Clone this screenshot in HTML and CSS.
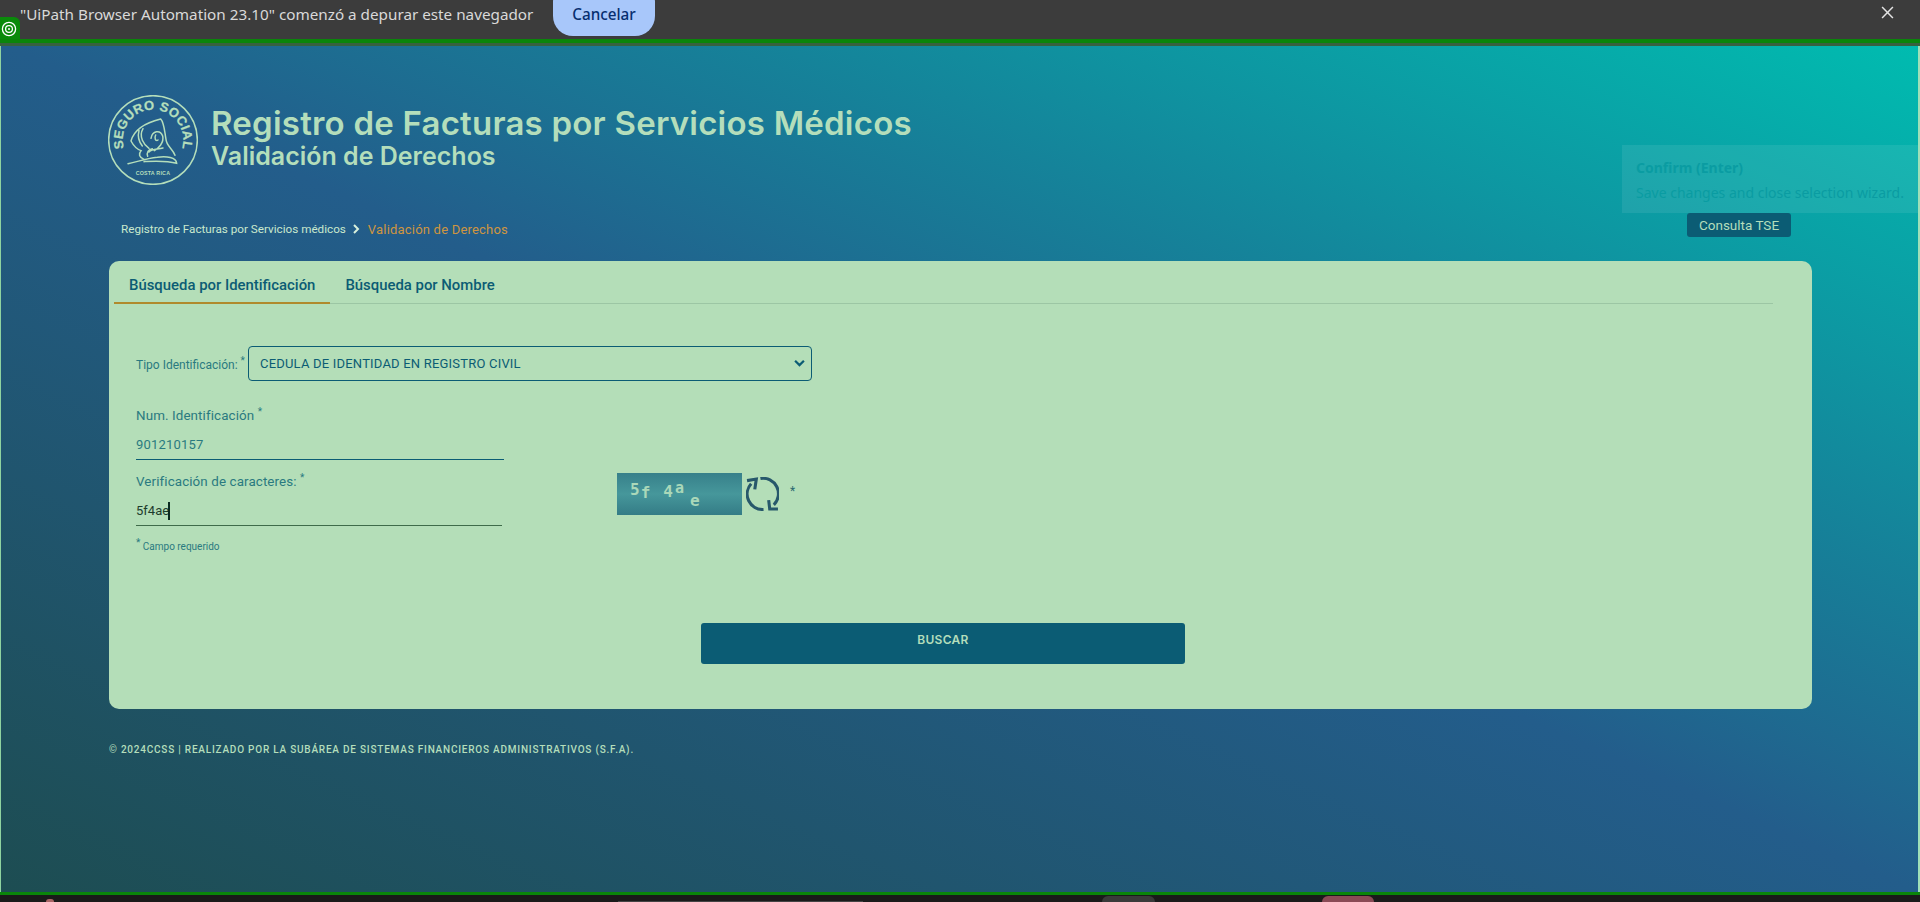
FILE: index.html
```html
<!DOCTYPE html>
<html lang="es">
<head>
<meta charset="utf-8">
<title>Validación de Derechos</title>
<link rel="stylesheet" href="styles.css">
</head>
<body>
<div class="infobar">
  <span class="infobar-text">"UiPath Browser Automation 23.10" comenzó a depurar este navegador</span>
  <button class="cancel">Cancelar</button>
  <svg class="close" viewBox="0 0 12 12"><path d="M1 1 11 11M11 1 1 11"/></svg>
</div>
<div class="target-tab">
  <svg viewBox="0 0 16 16"><circle cx="8" cy="8" r="6.6"/><circle cx="8" cy="8" r="3.4"/><circle class="dot" cx="8" cy="8" r="1"/></svg>
</div>
<div class="green-line"></div>
<main class="page">
  <div class="tooltip">
    <div class="tooltip-title">Confirm (Enter)</div>
    <div class="tooltip-text">Save changes and close selection wizard.</div>
  </div>
  <header class="brand">
    <svg class="logo" viewBox="57 45 270 270">
      <defs><path id="arc" d="M105 205A90.5 90.5 0 1 1 279 205"/></defs>
      <circle class="logo-ring" cx="192" cy="180" r="133"/>
      <text class="logo-arc"><textPath href="#arc" textLength="335">SEGURO SOCIAL</textPath></text>
      <path class="logo-fig" d="M117 251C150 244 170 236 205 232C232 228 262 232 263 250C230 241 200 243 165 245M126 183C135 150 170 128 215 117C226 128 227 158 231 178C232 198 250 205 258 226M126 183C134 198 145 208 156 212C148 222 150 232 165 238M162 146C148 170 165 195 180 205M186 175C190 152 214 148 221 168C226 188 208 205 196 212M180 216C190 206 205 209 222 204M176 229C172 218 178 208 190 206M150 152C145 170 152 188 160 198M200 165C195 175 200 185 207 180"/>
      <text class="logo-small" x="140" y="284" textLength="103">COSTA RICA</text>
    </svg>
    <div class="titles">
      <h1>Registro de Facturas por Servicios Médicos</h1>
      <h2>Validación de Derechos</h2>
    </div>
  </header>
  <div class="crumb-row">
    <nav class="crumbs">
      <span class="crumb-link">Registro de Facturas por Servicios médicos</span>
      <svg class="crumb-sep" viewBox="0 0 8 10"><path d="M2 1 6 5 2 9"/></svg>
      <span class="crumb-current">Validación de Derechos</span>
    </nav>
    <button class="tse">Consulta TSE</button>
  </div>
  <section class="card">
    <div class="tabs">
      <div class="tab active">Búsqueda por Identificación</div>
      <div class="tab">Búsqueda por Nombre</div>
    </div>
    <div class="form">
      <div class="select-row">
        <label class="select-label">Tipo Identificación: <sup>*</sup></label>
        <div class="select">
          <span>CEDULA DE IDENTIDAD EN REGISTRO CIVIL</span>
          <svg viewBox="0 0 10 8"><path d="M1 1.5 5 5.5 9 1.5"/></svg>
        </div>
      </div>
      <div class="fields">
        <div class="inputs">
          <div class="field first">
            <label>Num. Identificación <sup>*</sup></label>
            <div class="value">901210157</div>
          </div>
          <div class="field second">
            <label>Verificación de caracteres: <sup>*</sup></label>
            <div class="value typed">5f4ae<span class="caret"></span></div>
          </div>
          <div class="required"><sup>*</sup> Campo requerido</div>
        </div>
        <div class="captcha-row">
          <div class="captcha"><span class="c1">5</span><span class="c2">f</span><span class="c3">4</span><span class="c4">a</span><span class="c5">e</span></div>
          <svg class="refresh" viewBox="0 0 32 33"><path d="M17 31.500A15 15 0 0 1 5 6.500M1 3.500 10 2 8.500 12M14 1.500A15 15 0 0 1 27 27M22 22.500 23 31 31 31"/></svg>
          <span class="captcha-star">*</span>
        </div>
      </div>
      <div class="action"><button class="search">BUSCAR</button></div>
    </div>
  </section>
  <footer class="copy">© 2024CCSS | REALIZADO POR LA SUBÁREA DE SISTEMAS FINANCIEROS ADMINISTRATIVOS (S.F.A).</footer>
</main>
<div class="green-line bottom"></div>
<div class="taskbar">
  <span class="tb-a"></span><span class="tb-b"></span><span class="tb-c"></span><span class="tb-d"></span>
</div>
</body>
</html>
```
FILE: styles.css
```css
* { box-sizing: border-box; }
html, body { margin: 0; height: 902px; overflow: hidden; }
body {
  display: flex;
  flex-direction: column;
  position: relative;
  font-family: Roboto, "Liberation Sans", sans-serif;
  background: #1a1a1a;
}
sup { font-size: 10px; line-height: 0; }

.infobar {
  height: 39px;
  flex: none;
  background: #3c3c3c;
  display: flex;
  align-items: flex-start;
  padding-left: 20px;
  font-family: "Noto Sans", sans-serif;
  overflow: hidden;
}
.infobar-text { font-size: 15.250px; line-height: 28px; color: #d9d9d9; width: 533px; white-space: nowrap; }
.cancel {
  width: 102px;
  height: 54px;
  margin-top: -18px;
  border: 0;
  border-radius: 20px;
  background: #a8c7fa;
  color: #062e6f;
  font: 500 15.250px "Noto Sans", sans-serif;
  padding: 18px 0 8px;
  line-height: 28px;
}
.close { width: 13px; height: 13px; margin: 6px 26px 0 auto; }
.close path { stroke: #e3e3e3; stroke-width: 1.400; fill: none; }

.target-tab {
  position: absolute;
  left: 0;
  top: 17px;
  width: 20px;
  height: 24px;
  padding-right: 3px;
  background: #0a8a0a;
  border-radius: 0 6px 0 0;
  display: flex;
  align-items: center;
  justify-content: center;
}
.target-tab svg { width: 16px; height: 16px; }
.target-tab circle { fill: none; stroke: #fff; stroke-width: 1.300; }
.target-tab .dot { fill: #fff; stroke: none; }

.green-line { height: 4px; flex: none; background: #0a850a; box-shadow: 0 3px 0 #38613f; position: relative; z-index: 2; }
.green-line.bottom { height: 3px; box-shadow: none; }

.page {
  flex: 1;
  position: relative;
  padding: 0 106px 0 108px;
  border-left: 1px solid #8fd3a0;
  border-right: 2px solid #9fe0b8;
  background: linear-gradient(to top right, #1d4d52 0%, #235d8b 50%, #00bcb0 100%);
}

.tooltip {
  position: absolute;
  left: 1621px;
  right: 0;
  top: 102px;
  height: 68px;
  background: rgba(255, 255, 255, .08);
  padding: 13px 14px;
  font-family: "Noto Sans", sans-serif;
  color: #0a9ca2;
  font-size: 14px;
  white-space: nowrap;
}
.tooltip-title { font-weight: 700; line-height: 20px; }
.tooltip-text { line-height: 20px; margin-top: 5px; }

.brand { display: flex; align-items: flex-start; padding-top: 52px; margin-left: -1px; }
.logo { width: 90px; height: 90px; flex: none; }
.logo-ring { fill: none; stroke: #b4debb; stroke-width: 4.500; }
.logo-arc { fill: #b4debb; stroke: #b4debb; stroke-width: .8px; font: 700 39px "Liberation Sans", sans-serif; }
.logo-small { fill: #b4debb; font: 700 16px "Liberation Sans", sans-serif; }
.logo-fig { fill: none; stroke: #b4debb; stroke-width: 4.500; stroke-linecap: round; }
.titles { margin-left: 13px; padding-top: 10px; color: #b4debb; font-family: Inter, sans-serif; }
h1 { margin: 0; font-size: 33px; line-height: 36px; font-weight: 600; letter-spacing: .22px; white-space: nowrap; }
h2 { margin: 0; font-size: 25px; line-height: 30px; font-weight: 600; white-space: nowrap; }

.crumb-row { display: flex; align-items: flex-start; justify-content: space-between; height: 24px; margin-top: 28px; padding-left: 12px; padding-right: 21px; }
.crumbs { display: flex; align-items: center; height: 24px; font-size: 11.700px; margin-top: 4px; }
.crumb-link { color: #c9e9cd; }
.crumb-sep { width: 8px; height: 10px; margin: 0 8px 0 6px; }
.crumb-sep path { fill: none; stroke: #d8f0dc; stroke-width: 2; }
.crumb-current { color: #cf9540; font-size: 13px; letter-spacing: .2px; }
.tse {
  width: 104px;
  height: 24px;
  border: 0;
  border-radius: 3px;
  background: #0b5c74;
  color: #b4debb;
  font: 400 13.500px Roboto, sans-serif;
  padding: 0;
}

.card {
  margin-top: 24px;
  height: 448px;
  background: #b4deb8;
  border-radius: 10px;
  padding: 0 39px 0 5px;
}
.tabs { display: flex; height: 43px; border-bottom: 1px solid #9cc6a4; }
.tab { padding: 15px 15px 0; height: 43px; font-size: 14.900px; font-weight: 500; color: #0b5c74; line-height: 18px; white-space: nowrap; }
.tab.active { border-bottom: 2px solid #b08a2c; }

.form { padding: 42px 0 0 22px; }
.select-row { display: flex; align-items: center; height: 35px; }
.select-label { font-size: 12px; color: #2a7a80; white-space: nowrap; margin-top: 3px; width: 112px; }
.select {
  width: 564px;
  height: 35px;
  display: flex;
  align-items: center;
  justify-content: space-between;
  border: 1px solid #0b5c74;
  border-radius: 4px;
  padding: 0 6px 0 11px;
  color: #0b5c74;
  font-size: 13px;
  letter-spacing: .2px;
}
.select svg { width: 11px; height: 9px; }
.select path { fill: none; stroke: #0b5c74; stroke-width: 2; }

.fields { display: flex; }
.inputs { width: 481px; padding-top: 25px; }
.field label { display: block; font-size: 13.400px; color: #2a7a80; line-height: 20px; letter-spacing: .1px; }
.field .value { font-size: 13px; color: #2a7a80; line-height: 18px; margin-top: 10px; padding-bottom: 5px; letter-spacing: .2px; }
.field.first { width: 368px; border-bottom: 1px solid #0b5c74; }
.field.second { width: 366px; border-bottom: 1px solid #3f6b4a; margin-top: 12px; }
.field.second .value { color: #1c3c2c; margin-top: 10px; padding-bottom: 5px; display: flex; align-items: center; letter-spacing: 0; }
.caret { width: 1.500px; height: 18px; margin-left: -1px; background: #0a2a20; }
.required { font-size: 10px; color: #2a7a80; margin-top: 13px; line-height: 16px; }

.captcha-row { display: flex; align-items: flex-start; padding-top: 92px; }
.captcha {
  width: 125px;
  height: 42px;
  display: flex;
  align-items: flex-start;
  padding-left: 13px;
  background: linear-gradient(#37808a, #46979b 50%, #347c86);
  color: #aad8b9;
  font: 700 15px "DejaVu Sans Mono", monospace;
  line-height: 16px;
}
.c1 { margin-top: 9px; font-size: 16px; }
.c2 { margin-top: 12px; margin-left: 1px; font-size: 16px; }
.c3 { margin-top: 11px; margin-left: 13px; font-size: 16px; }
.c4 { margin-top: 7px; margin-left: 2px; }
.c5 { margin-top: 20px; margin-left: 6px; font-size: 16px; }
.refresh { width: 33px; height: 34px; margin: 4px 0 0 4px; }
.refresh path { fill: none; stroke: #27586b; stroke-width: 3; }
.captcha-star { margin: 11px 0 0 11px; font-size: 12px; color: #2a6a70; }

.action { display: flex; padding-left: 565px; margin-top: 68px; }
.search {
  width: 484px;
  height: 41px;
  border: 0;
  border-radius: 3px;
  background: #0b5c74;
  color: #b4debb;
  font: 600 12px Inter, sans-serif;
  padding: 0 0 9px;
  letter-spacing: .3px;
}

.copy { margin-top: 33px; font-size: 10px; font-weight: 500; letter-spacing: .78px; color: #b4debb; line-height: 16px; white-space: nowrap; }

.taskbar { height: 7px; flex: none; background: #1a1a1a; position: relative; overflow: hidden; }
.taskbar span { position: absolute; display: block; }
.tb-a { left: 46px; top: 4px; width: 8px; height: 3px; background: #a66; border-radius: 4px 4px 0 0; }
.tb-b { left: 618px; top: 6px; width: 245px; height: 1px; background: #444; }
.tb-c { left: 1102px; top: 1px; width: 53px; height: 6px; background: #3a3a3a; border-radius: 6px 6px 0 0; }
.tb-d { left: 1322px; top: 1px; width: 52px; height: 6px; background: #8a4a55; border-radius: 6px 6px 0 0; }
```
